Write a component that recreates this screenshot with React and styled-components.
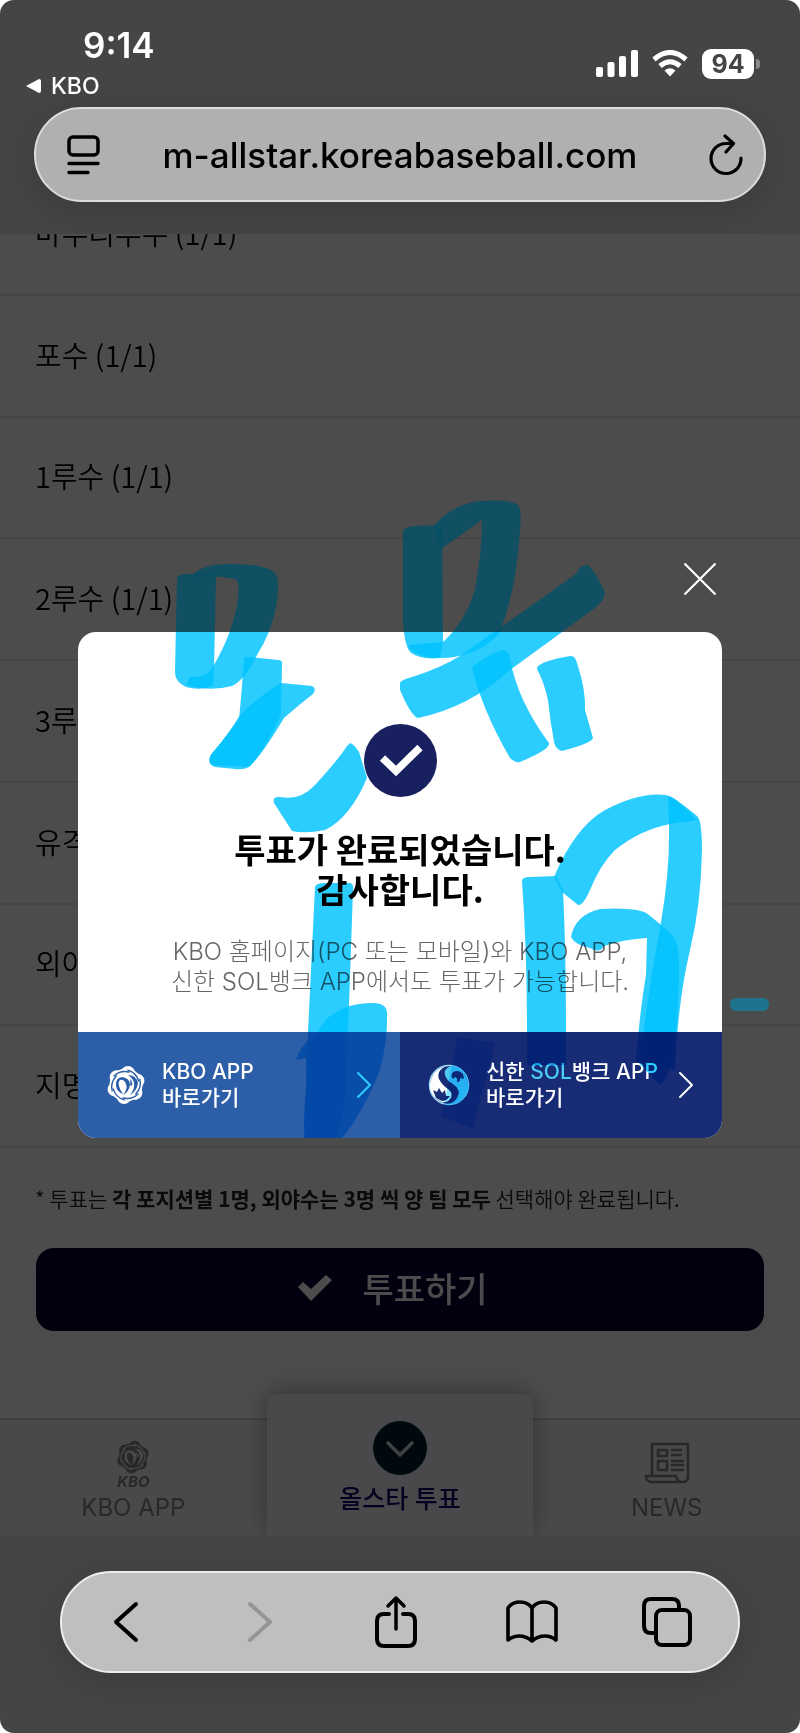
import React, { useId } from "react";
import styled, { createGlobalStyle } from "styled-components";

const GlobalStyle = createGlobalStyle`
  * { box-sizing: border-box; }
  body { margin: 0; background: #fff; }
  button, input { font: inherit; color: inherit; border: 0; background: none; padding: 0; margin: 0; }
  a { color: inherit; text-decoration: none; }
  svg { display: block; flex: none; }
`;

const latin = `"Inter", "Liberation Sans", sans-serif`;
const korean = `"Noto Sans CJK KR", sans-serif`;
const mixed = `"Inter", "Noto Sans CJK KR", sans-serif`;

const Screen = styled.div`
  display: flex;
  flex-direction: column;
  min-height: 100vh;
  background: #454545;
  border-radius: 14px;
  overflow: hidden;
  font-family: ${mixed};
`;

const Header = styled.header`
  padding: 25px 34px 32px;
`;

const StatusBar = styled.div`
  display: flex;
  justify-content: space-between;
  height: 82px;
  color: #fff;
`;

const Clock = styled.div`
  padding: 0 0 0 49px;
  font: 600 35px/40px ${latin};
`;

const BackLink = styled.a`
  display: flex;
  align-items: center;
  gap: 10px;
  margin-left: -8px;
  font: 500 23px/42px ${latin};
`;

const Indicators = styled.div`
  display: flex;
  align-items: center;
  gap: 14px;
  height: 78px;
  padding-right: 6px;
`;

const Battery = styled.span`
  display: flex;
  align-items: center;
  gap: 2px;
  &::after {
    content: "";
    width: 4px;
    height: 10px;
    border-radius: 0 4px 4px 0;
    background: #8a8a8a;
  }
`;

const Charge = styled.span`
  width: 52px;
  border-radius: 9px;
  background: #fff;
  color: #454545;
  text-align: center;
  font: 700 25px/30px ${latin};
`;

const GlassBar = styled.div`
  display: flex;
  align-items: center;
  border: 2px solid #dcdcdc;
  border-radius: 52px;
  box-shadow: 0 8px 40px rgba(0, 0, 0, 0.16);
  color: #000;
`;

const AddressBar = styled(GlassBar)`
  height: 95px;
  padding: 0 20px 0 30px;
  background: #b0b0b0;
`;

const Address = styled.input`
  flex: 1;
  min-width: 0;
  padding-right: 10px;
  text-align: center;
  font: 500 35px/44px ${latin};
  outline: 0;
`;

const IconButton = styled.button`
  color: ${(p) => (p.$muted ? "#959595" : "#000")};
`;

const Main = styled.main`
  position: relative;
  display: flex;
  flex-direction: column;
  background: #fff;
  color: #000;
`;

const ListWindow = styled.div`
  display: flex;
  flex-direction: column;
  justify-content: flex-end;
  height: 914px;
  overflow: hidden;
`;

const Positions = styled.ul`
  flex: none;
  display: grid;
  grid-auto-rows: 1fr;
  height: 974px;
  margin: 0;
  padding: 0;
  list-style: none;
`;

const Position = styled.li`
  display: flex;
  border-bottom: 2px solid #e6e6e6;
`;

const PositionButton = styled.button`
  flex: 1;
  padding: 0 35px 4px;
  text-align: left;
  font: 350 29px/40px ${korean};
`;

const Note = styled.p`
  margin: 34px 35px;
  color: #222;
  white-space: nowrap;
  font: 350 21px/32px ${korean};
  b { font-weight: 700; }
`;

const VoteButton = styled.button`
  display: flex;
  align-items: center;
  justify-content: center;
  gap: 30px;
  height: 83px;
  margin: 0 36px 87px;
  padding: 0 14px 4px 0;
  border-radius: 18px;
  background: #000032;
  color: #fff;
  font: 500 34px/48px ${korean};
`;

const TabBar = styled.nav`
  display: grid;
  grid-template-columns: repeat(3, 1fr);
  height: 118px;
  border-top: 2px solid #d6d6d6;
  background: #f2f4f8;
`;

const Tab = styled.a`
  display: flex;
  flex-direction: column;
  align-items: center;
  justify-content: flex-end;
  gap: ${(p) => p.$gap}px;
  padding-bottom: 12px;
  color: #888;
  font: 400 24px/32px ${mixed};
`;

const ActiveTab = styled(Tab)`
  margin-top: -26px;
  padding-bottom: 21px;
  border-radius: 12px 12px 0 0;
  background: #f4f6fa;
  box-shadow: 0 -4px 24px rgba(0, 0, 0, 0.3);
  clip-path: inset(-40px -20px 0);
  color: #10006a;
  font-size: 25px;
  font-weight: 500;
`;

const Backdrop = styled.div`
  position: absolute;
  inset: 0;
  display: flex;
  align-items: center;
  padding: 0 78px;
  background: rgba(0, 0, 0, 0.7);
`;

const MarkerLayer = styled.svg`
  position: absolute;
  inset: 0;
  width: 100%;
  height: 100%;
  pointer-events: none;
  mix-blend-mode: ${(p) => (p.$blend ? "multiply" : "normal")};
`;

const DialogFrame = styled.div`
  position: relative;
  flex: 1;
`;

const CloseButton = styled.button`
  position: absolute;
  right: 5px;
  bottom: calc(100% + 36px);
  color: #fff;
`;

const Dialog = styled.section`
  position: relative;
  overflow: hidden;
  border-radius: 18px;
  background: #fff;
`;

const DialogBody = styled.div`
  display: flex;
  flex-direction: column;
  align-items: center;
  height: 400px;
  padding-top: 92px;
  text-align: center;
`;

const DialogTitle = styled.h2`
  margin: 32px 0 0;
  color: #000;
  font: 700 34px/40px ${korean};
`;

const DialogText = styled.p`
  margin: 28px 0 0;
  color: #666;
  white-space: nowrap;
  font: 300 24px/30px ${mixed};
`;

const AppLinks = styled.div`
  display: grid;
  grid-template-columns: 1fr 1fr;
`;

const AppLink = styled.a`
  display: flex;
  align-items: center;
  gap: 16px;
  height: 106px;
  padding: 0 28px;
  background: ${(p) => (p.$navy ? "#182b75" : "#2d5fa8")};
  color: #fff;
  white-space: nowrap;
  font: 500 21px/26px ${mixed};
`;

const LinkLabel = styled.span`
  flex: 1;
`;

const Sol = styled.span`
  color: #4cc9f5;
`;

const Footer = styled.footer`
  padding: 35px 60px 60px;
`;

const Toolbar = styled(GlassBar)`
  justify-content: space-between;
  height: 102px;
  padding: 0 43px 0 35px;
  border-color: #ededed;
  background: #bfbfbf;
`;

const ToolButton = styled(IconButton)`
  display: flex;
  justify-content: center;
  width: 56px;
`;

const Chevron = ({ w, h, d, sw }) => (
  <svg width={w} height={h} viewBox={`0 0 ${w} ${h}`} fill="none" stroke="currentColor" strokeWidth={sw} strokeLinecap="round" strokeLinejoin="round">
    <path d={d} />
  </svg>
);

const KboMark = ({ size }) => {
  const id = useId();
  return (
    <svg width={size} height={size} viewBox="0 0 40 40" fill="currentColor">
      <mask id={id}>
        <rect width="40" height="40" fill="#fff" />
        <g fill="none" stroke="#000" strokeWidth="1.4" strokeLinecap="round">
          {[0, 60, 120, 180, 240, 300].map((a) => (
            <path key={a} transform={`rotate(${a} 20 20)`} d="M8 11 Q14 5 23 7" />
          ))}
        </g>
        <path fill="#000" d="M10 21 Q9 13 16 12 Q24 13 24 20 Q23 27 17 30 Q22 24 20 19 Q18 14 14 15 Q12 17 13 21 Q14 25 17 29 Q11 27 10 21Z" />
        <path fill="#000" d="M22 10 Q30 10 32 18 Q31 26 24 30 Q29 24 28 18 Q27 13 22 10Z" />
        <path fill="#000" d="M24 14 Q27 16 26 21 L24 20 Q25 17 24 14Z" />
      </mask>
      <g mask={`url(#${id})`}>
        <circle cx="20" cy="20" r="16.500" />
        {[0, 60, 120, 180, 240, 300].map((a) => (
          <circle key={a} transform={`rotate(${a} 20 20)`} cx="22" cy="8" r="7" />
        ))}
      </g>
    </svg>
  );
};

const ShinhanMark = () => (
  <svg width="42" height="42" viewBox="0 0 42 42">
    <circle cx="21" cy="21" r="19.500" fill="#182b75" stroke="#9fdcfa" strokeWidth="1.500" />
    <path fill="#fff" d="M19 2 Q8 6 11 15 Q14 21 20 25 Q26 30 22 35 Q19 39 14 38 Q1 32 2 20 Q4 5 19 2Z" />
    <path fill="#182b75" d="M8 34 L5 26 L9 28 L11 24 L14 29 L17 26 L18 32 L22 32 Q17 39 12 36Z" />
    <path fill="#4cc9f5" d="M23 2 Q15 5 17 11 Q18 16 25 20 Q34 26 29 34 Q26 39 20 40 Q32 41 37 32 Q42 24 39 16 Q35 3 23 2Z" />
    <path fill="#182b75" d="M25 8 Q31 5 35 10 L36 15 L32 14 Q33 18 29 18 Q30 14 27 13 L25 15 Q22 12 25 8Z" />
  </svg>
);

const SignalIcon = () => (
  <svg width="42" height="28" viewBox="0 0 42 28" fill="currentColor">
    <rect x="0" y="17" width="7" height="10" rx="2" />
    <rect x="11.500" y="12" width="7" height="15" rx="2" />
    <rect x="23" y="6" width="7" height="21" rx="2" />
    <rect x="35" y="0" width="7" height="27" rx="2" />
  </svg>
);

const WifiIcon = () => (
  <svg width="36" height="28" viewBox="0 0 36 28" fill="none" stroke="currentColor" strokeWidth="5">
    <path d="M2 9.500 Q18 -4.500 34 9.500" />
    <path d="M8 16 Q18 7.500 28 16" />
    <path d="M12.500 20.500 Q18 16 23.500 20.500 L18 26.500Z" fill="currentColor" stroke="none" />
  </svg>
);

const PageIcon = () => (
  <svg width="36" height="42" viewBox="0 0 36 42" fill="none" stroke="currentColor" strokeWidth="3.500" strokeLinecap="round">
    <rect x="3" y="3" width="29" height="18" rx="4" />
    <path d="M3 29.500 H32 M3 38.500 H22" />
  </svg>
);

const ReloadIcon = () => (
  <svg width="36" height="42" viewBox="0 0 36 42" fill="none" stroke="currentColor" strokeWidth="3.200" strokeLinecap="round" strokeLinejoin="round">
    <path d="M33 24 A15 15 0 1 1 18 9.500 H25" />
    <path d="M17 2 L25.500 9.500 L18 18" />
  </svg>
);

const CloseIcon = () => (
  <svg width="34" height="34" viewBox="0 0 34 34" stroke="currentColor" strokeWidth="2.200">
    <path d="M1.500 1.500 L32.500 32.500 M32.500 1.500 L1.500 32.500" />
  </svg>
);

const DoneIcon = () => (
  <svg width="73" height="73" viewBox="0 0 73 73">
    <circle cx="36.500" cy="36.500" r="36.500" fill="#18205f" />
    <path d="M18.500 34 L32 47 L56 23.500" fill="none" stroke="#fff" strokeWidth="7.500" />
  </svg>
);

const VoteCheck = () => (
  <svg width="34" height="26" viewBox="0 0 34 26" fill="currentColor">
    <path d="M0 12 L5 7 L13 14 L28 0 L34 5 L13 26Z" />
  </svg>
);

const DownBadge = () => (
  <svg width="54" height="54" viewBox="0 0 54 54">
    <circle cx="27" cy="27" r="27" fill="#00202c" />
    <path d="M15 22 L27 34 L39 22" fill="none" stroke="#d8dde4" strokeWidth="3.500" strokeLinecap="round" strokeLinejoin="round" />
  </svg>
);

const NewsIcon = () => (
  <svg width="46" height="42" viewBox="0 0 46 42" fill="none" stroke="currentColor" strokeWidth="2.600" strokeLinejoin="round">
    <path d="M8 33 V2 H44 V36 Q43 40 39 40 H7 Q2 39 2 34 H32 Q33 40 38 40" />
    <path d="M14 8 H23 V14 H14Z M14 19 H23 V28 H14Z M27 8 H38 M27 13 H38 M27 19 H40 M27 23 H40 M27 28 H40" />
  </svg>
);

const KboWordmark = styled.span`
  font: italic 700 15px/16px ${latin};
`;

const LogoStack = styled.span`
  display: flex;
  flex-direction: column;
  align-items: center;
`;

const ShareIcon = () => (
  <svg width="42" height="54" viewBox="0 0 42 54" fill="none" stroke="currentColor" strokeWidth="4" strokeLinecap="round" strokeLinejoin="round">
    <path d="M14 19 H9 Q2 19 2 26 V44 Q2 51 9 51 H33 Q40 51 40 44 V26 Q40 19 33 19 H28" />
    <path d="M21 34 V3 M13 11 L21 3 L29 11" strokeWidth="3.500" />
  </svg>
);

const BookIcon = () => (
  <svg width="52" height="44" viewBox="0 0 52 44" fill="none" stroke="currentColor" strokeWidth="3.600" strokeLinejoin="round">
    <path d="M26 8 Q22 2 14 2 Q6 2 2 8 V40 Q7 36 13 36 Q20 36 26 41 Q32 36 39 36 Q45 36 50 40 V8 Q46 2 38 2 Q30 2 26 8Z M26 8 V40" />
  </svg>
);

const TabsIcon = () => (
  <svg width="50" height="50" viewBox="0 0 50 50" fill="none" stroke="currentColor" strokeWidth="4" strokeLinejoin="round">
    <path d="M37 12 V9 Q37 2 30 2 H9 Q2 2 2 9 V29 Q2 36 9 36 H12" />
    <rect x="14" y="13" width="34" height="35" rx="6" />
  </svg>
);

/* Highlighter strokes, in page coordinates */
const strokes = [
  "M177 578 Q178 574 186 574 L216 575 L214 670 L213 686 Q200 691 186 687 Q175 682 175 672Z",
  "M194 573 Q204 565 225 564 Q262 563 274 572 Q279 577 278 590 Q276 625 257 655 Q245 680 232 686 Q210 692 186 685 L190 677 Q208 678 214 665 Q234 630 238 598 Q240 582 235 579 Q215 575 194 577Z",
  "M244 660 Q244 656 250 657 L279 660 Q283 661 282 665 L281 715 Q265 750 250 766 Q245 770 235 769 L215 767 Q206 764 211 755 Q225 738 239 719 Q241 700 244 660Z",
  "M281 683 L312 686 Q317 688 313 694 Q300 704 284 718 Q262 755 249 767 L213 765 Q206 760 213 752 Q228 735 240 715 Q260 695 281 683Z",
  "M350 743 Q354 744 359 752 L367 778 Q350 818 325 830 Q305 834 292 831 L274 803 Q272 796 280 797 Q300 801 315 785 Q338 760 347 746Z",
  "M403 531 Q404 527 413 526 L442 525 L443 642 L440 658 Q420 660 410 652 Q404 644 403 620Z",
  "M433 527 Q450 505 480 501 Q510 499 518 505 Q522 510 520 530 Q515 600 498 635 Q475 658 440 658 Q415 658 408 645 L443 642 Q465 622 475 590 Q482 550 482 520 L441 549Z",
  "M400 683 Q400 680 415 676 Q440 668 460 656 L576 574 Q580 565 587 565 Q592 566 605 592 Q605 600 595 608 L510 670 Q470 707 418 718 Q411 716 400 690Z",
  "M472 667 Q490 653 503 650 Q508 650 510 658 Q517 700 549 743 Q551 749 520 762 Q515 763 510 758 Q482 710 472 667Z",
  "M537 669 Q536 662 570 656 Q575 655 577 663 Q586 690 585 710 L593 738 Q592 743 562 751 Q556 750 554 742 Q550 720 548 700 Q544 682 537 669Z",
  "M315 887 Q316 883 325 883 L350 883 Q354 884 353 890 L349 1005 L345 1100 Q340 1135 335 1138 L304 1138 L308 1032Z",
  "M345 1008 Q355 1003 375 1003 Q387 1004 387 1013 Q388 1040 380 1070 Q362 1115 342 1138 L306 1138 Q302 1130 306 1090 L306 1058 L296 1060 Q300 1045 318 1032 Q325 1015 345 1008Z",
  "M522 881 Q522 877 530 877 L556 876 L563 890 Q566 950 566 1032 L566 1065 L527 1065 L527 1032 Q527 950 522 881Z",
  "M554 877 Q575 827 605 810 Q640 792 665 795 Q672 795 682 805 L697 820 L670 824 Q640 830 615 850 Q600 865 590 890 Q583 906 578 905 L562 892Z",
  "M668 796 Q678 800 697 816 Q702 820 702 850 Q701 905 690 950 Q678 1000 675 1070 L640 1060 Q648 990 661 922 Q670 870 669 824Z",
  "M571 937 Q575 915 600 909 Q640 907 649 915 Q662 925 672 935 Q679 942 679 965 Q679 1010 675 1040 Q672 1075 660 1085 L636 1060 Q640 1010 646 975 L647 938 Q625 939 604 946 Q600 954 590 948 Q575 945 571 937Z",
];

const Marker = ({ color }) => (
  <g fill={color}>
    {strokes.map((d) => (
      <path key={d} d={d} opacity="0.83" />
    ))}
    <path d="M457 1037 L495 1043 Q490 1070 480 1100 L473 1129 L441 1116 L446 1095Z" opacity="0.5" />
  </g>
);

const positions = ["마무리투수 (1/1)", "포수 (1/1)", "1루수 (1/1)", "2루수 (1/1)", "3루수 (1/1)", "유격수 (1/1)", "외야수 (3/3)", "지명타자 (1/1)"];

export default function App() {
  return (
    <Screen>
      <GlobalStyle />
      <Header>
        <StatusBar>
          <div>
            <Clock>9:14</Clock>
            <BackLink href="#kbo">
              <svg width="15" height="14" viewBox="0 0 15 14" fill="currentColor"><path d="M0 7 L13 0 Q15 0 15 2 V12 Q15 14 13 14Z" /></svg>
              KBO
            </BackLink>
          </div>
          <Indicators>
            <SignalIcon />
            <WifiIcon />
            <Battery><Charge>94</Charge></Battery>
          </Indicators>
        </StatusBar>
        <AddressBar>
          <IconButton aria-label="Page menu"><PageIcon /></IconButton>
          <Address aria-label="Address" readOnly value="m-allstar.koreabaseball.com" />
          <IconButton aria-label="Reload"><ReloadIcon /></IconButton>
        </AddressBar>
      </Header>

      <Main>
        <ListWindow>
          <Positions>
            {positions.map((name) => (
              <Position key={name}><PositionButton>{name}</PositionButton></Position>
            ))}
          </Positions>
        </ListWindow>
        <Note>
          * 투표는 <b>각 포지션별 1명, 외야수는 3명 씩 양 팀 모두</b> 선택해야 완료됩니다.
        </Note>
        <VoteButton><VoteCheck />투표하기</VoteButton>
        <TabBar>
          <Tab $gap={2} href="#app">
            <LogoStack><KboMark size={34} /><KboWordmark>KBO</KboWordmark></LogoStack>
            KBO APP
          </Tab>
          <ActiveTab $gap={8} href="#vote"><DownBadge />올스타 투표</ActiveTab>
          <Tab $gap={8} href="#news"><NewsIcon />NEWS</Tab>
        </TabBar>

        <Backdrop>
          <MarkerLayer viewBox="0 234 800 1302" preserveAspectRatio="none" aria-hidden="true">
            <Marker color="#055166" />
            <rect x="730" y="998" width="39" height="13" rx="6" fill="#1a7896" opacity="0.9" />
          </MarkerLayer>
          <DialogFrame>
            <CloseButton aria-label="닫기"><CloseIcon /></CloseButton>
            <Dialog role="dialog" aria-labelledby="done-title">
              <DialogBody>
                <DoneIcon />
                <DialogTitle id="done-title">투표가 완료되었습니다.<br />감사합니다.</DialogTitle>
                <DialogText>
                  KBO 홈페이지(PC 또는 모바일)와 KBO APP,<br />
                  신한 SOL뱅크 APP에서도 투표가 가능합니다.
                </DialogText>
              </DialogBody>
              <AppLinks>
                <AppLink href="#kbo-app">
                  <KboMark size={40} />
                  <LinkLabel>KBO APP<br />바로가기</LinkLabel>
                  <Chevron w={16} h={28} d="M2 2 L14 14 L2 26" sw={2} />
                </AppLink>
                <AppLink $navy href="#sol-app">
                  <ShinhanMark />
                  <LinkLabel>신한 <Sol>SOL</Sol>뱅크 APP<br />바로가기</LinkLabel>
                  <Chevron w={16} h={28} d="M2 2 L14 14 L2 26" sw={2} />
                </AppLink>
              </AppLinks>
              <MarkerLayer $blend viewBox="78 632 644 506" preserveAspectRatio="none" aria-hidden="true">
                <Marker color="#00c3ff" />
              </MarkerLayer>
            </Dialog>
          </DialogFrame>
        </Backdrop>
      </Main>

      <Footer>
        <Toolbar>
          <ToolButton aria-label="Back"><Chevron w={28} h={42} d="M25 3 L5 21 L25 39" sw={4} /></ToolButton>
          <ToolButton $muted aria-label="Forward"><Chevron w={28} h={42} d="M3 3 L23 21 L3 39" sw={4} /></ToolButton>
          <ToolButton aria-label="Share"><ShareIcon /></ToolButton>
          <ToolButton aria-label="Bookmarks"><BookIcon /></ToolButton>
          <ToolButton aria-label="Tabs"><TabsIcon /></ToolButton>
        </Toolbar>
      </Footer>
    </Screen>
  );
}
